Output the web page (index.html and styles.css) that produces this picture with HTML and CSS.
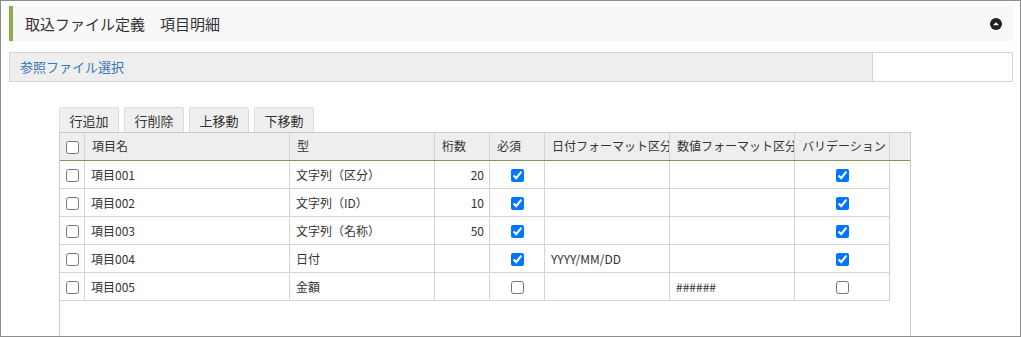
FILE: index.html
```html
<!DOCTYPE html>
<html lang="ja">
<head>
<meta charset="utf-8">
<link rel="stylesheet" href="styles.css">
</head>
<body>
<div class="frame">
  <div class="panel-head">
    <h1 class="panel-title">取込ファイル定義　項目明細</h1>
    <svg class="collapse" width="12" height="12" viewBox="0 0 12 12"><circle cx="6" cy="6" r="6" fill="#222"/><path d="M3 7.3 L6 4.2 L9 7.3 Z" fill="#fff"/></svg>
  </div>
  <div class="ref-row">
    <a class="ref-label">参照ファイル選択</a>
    <div class="ref-value"></div>
  </div>
  <div class="grid-area">
    <div class="toolbar">
      <button class="tbtn">行追加</button>
      <button class="tbtn">行削除</button>
      <button class="tbtn">上移動</button>
      <button class="tbtn">下移動</button>
    </div>
    <div class="grid">
      <div class="grow ghead">
        <div class="c c-chk"><input type="checkbox"></div>
        <div class="c c-name">項目名</div>
        <div class="c c-type">型</div>
        <div class="c c-len">桁数</div>
        <div class="c c-req">必須</div>
        <div class="c c-date">日付フォーマット区分</div>
        <div class="c c-num">数値フォーマット区分</div>
        <div class="c c-val">バリデーション</div>
      </div>
      <div class="grow">
        <div class="c c-chk"><input type="checkbox"></div>
        <div class="c c-name">項目001</div>
        <div class="c c-type">文字列（区分）</div>
        <div class="c c-len right">20</div>
        <div class="c c-req center"><input type="checkbox" checked></div>
        <div class="c c-date"></div>
        <div class="c c-num"></div>
        <div class="c c-val center"><input type="checkbox" checked></div>
      </div>
      <div class="grow">
        <div class="c c-chk"><input type="checkbox"></div>
        <div class="c c-name">項目002</div>
        <div class="c c-type">文字列（ID）</div>
        <div class="c c-len right">10</div>
        <div class="c c-req center"><input type="checkbox" checked></div>
        <div class="c c-date"></div>
        <div class="c c-num"></div>
        <div class="c c-val center"><input type="checkbox" checked></div>
      </div>
      <div class="grow">
        <div class="c c-chk"><input type="checkbox"></div>
        <div class="c c-name">項目003</div>
        <div class="c c-type">文字列（名称）</div>
        <div class="c c-len right">50</div>
        <div class="c c-req center"><input type="checkbox" checked></div>
        <div class="c c-date"></div>
        <div class="c c-num"></div>
        <div class="c c-val center"><input type="checkbox" checked></div>
      </div>
      <div class="grow">
        <div class="c c-chk"><input type="checkbox"></div>
        <div class="c c-name">項目004</div>
        <div class="c c-type">日付</div>
        <div class="c c-len right"></div>
        <div class="c c-req center"><input type="checkbox" checked></div>
        <div class="c c-date">YYYY/MM/DD</div>
        <div class="c c-num"></div>
        <div class="c c-val center"><input type="checkbox" checked></div>
      </div>
      <div class="grow">
        <div class="c c-chk"><input type="checkbox"></div>
        <div class="c c-name">項目005</div>
        <div class="c c-type">金額</div>
        <div class="c c-len right"></div>
        <div class="c c-req center"><input type="checkbox"></div>
        <div class="c c-date"></div>
        <div class="c c-num">######</div>
        <div class="c c-val center"><input type="checkbox"></div>
      </div>
    </div>
  </div>
</div>
</body>
</html>
```
FILE: styles.css
```css
html, body {
  margin: 0;
  padding: 0;
  background: #fff;
}
body {
  font-family: "Noto Sans CJK JP", "Noto Sans", sans-serif;
  color: #333;
}
.frame {
  box-sizing: border-box;
  width: 1021px;
  height: 337px;
  border: 1px solid #8c8c8c;
  padding: 5px 7px 0 8px;
  overflow: hidden;
}
.panel-head {
  box-sizing: border-box;
  height: 35px;
  background: #f8f8f8;
  border-left: 4px solid #8aad4f;
  display: flex;
  align-items: center;
  justify-content: space-between;
  padding: 0 11px 0 12px;
}
.panel-title {
  margin: 0;
  font-size: 15px;
  font-weight: normal;
  color: #333;
  letter-spacing: 0;
}
.collapse {
  display: block;
}
.ref-row {
  margin-top: 11px;
  height: 30px;
  box-sizing: border-box;
  display: flex;
  border: 1px solid #d4d4d4;
  background: #eee;
}
.ref-label {
  flex: 1;
  font-size: 13px;
  color: #3377b7;
  padding: 0 0 0 10px;
  line-height: 28px;
  text-decoration: none;
}
.ref-value {
  width: 139px;
  background: #fff;
  border-left: 1px solid #d4d4d4;
}
.grid-area {
  margin: 25px 0 0 50px;
}
.toolbar {
  display: flex;
  gap: 5px;
}
.tbtn {
  box-sizing: border-box;
  width: 60px;
  height: 25px;
  margin: 0;
  padding: 0;
  font-family: inherit;
  font-size: 13px;
  color: #333;
  background: #efefef;
  border: 1px solid #dcdcdc;
  border-bottom: none;
  border-radius: 3px 3px 0 0;
  line-height: 23px;
}
.grid {
  box-sizing: border-box;
  width: 852px;
  height: 220px;
  border: 1px solid #ccc;
  border-bottom: none;
}
.grow {
  display: flex;
  height: 28px;
}
.ghead {
  background: #eee;
  border-bottom: 1px solid #7e9a55;
  height: 28px;
  box-sizing: border-box;
}
.c {
  box-sizing: border-box;
  flex: none;
  height: 28px;
  border-right: 1px solid #d4d4d4;
  border-bottom: 1px solid #d4d4d4;
  font-size: 12px;
  line-height: 27px;
  padding: 0 6px;
  white-space: nowrap;
  overflow: hidden;
}
.ghead .c {
  height: 27px;
  border-bottom: none;
  line-height: 26px;
  padding-left: 7px;
  padding-right: 0;
}
.c-chk { width: 25px; padding: 0; display: flex; align-items: center; justify-content: center; }
.ghead .c-chk { padding: 0; }
.c-name { width: 205px; }
.c-type { width: 145px; }
.c-len { width: 55px; }
.c-req { width: 55px; }
.c-date { width: 125px; }
.c-num { width: 125px; }
.c-val { width: 95px; }
.right { text-align: right; padding-right: 5px; }
.center { display: flex; align-items: center; justify-content: center; }
input[type="checkbox"] {
  width: 13px;
  height: 13px;
  margin: 0;
}
.c-chk input { margin-top: 1px; }
.center input { margin-top: 2px; }
```
